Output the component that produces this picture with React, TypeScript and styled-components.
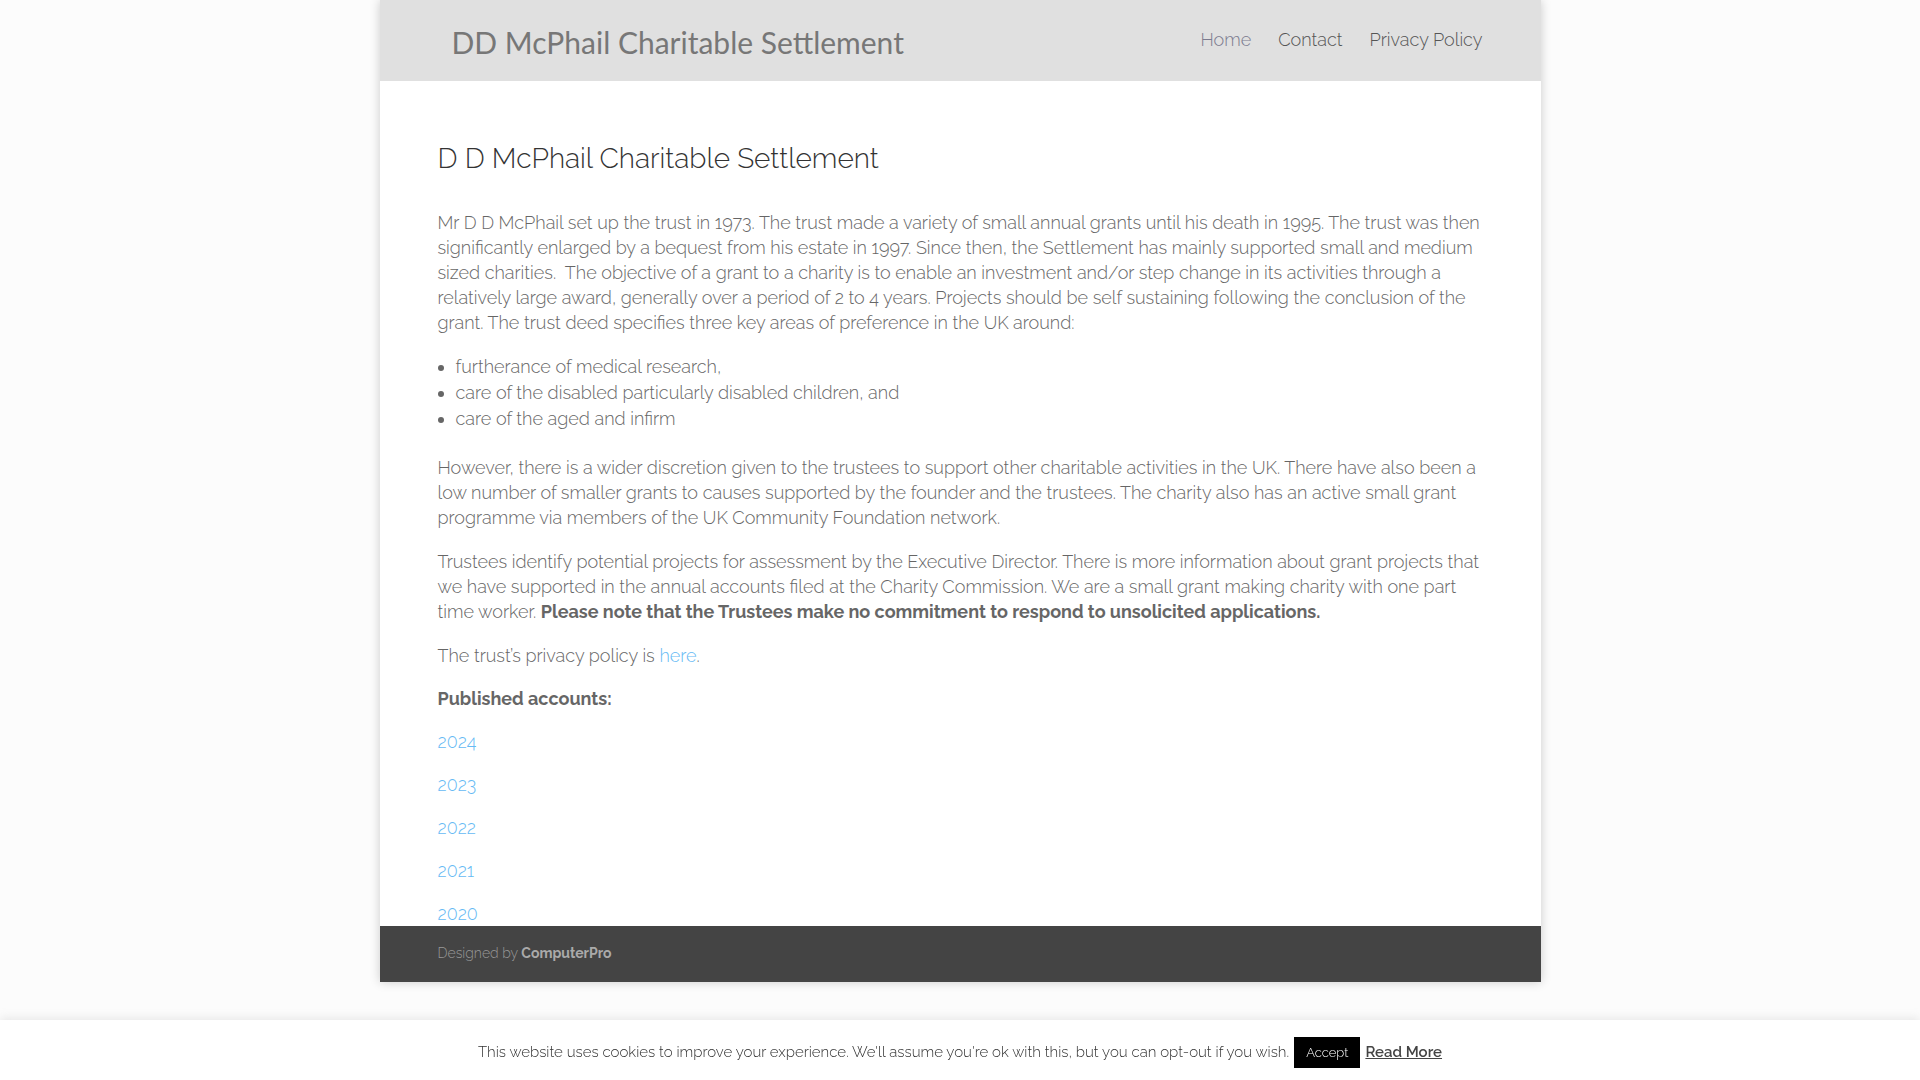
import React, { useState } from 'react';
import styled, { createGlobalStyle } from 'styled-components';

const colors = {
  page: '#fcfcfc',
  header: '#e0e0e0',
  logo: '#777',
  text: '#666',
  heading: '#333',
  link: '#66baf4',
  footer: '#444',
  footerText: '#999',
};

const GlobalStyle = createGlobalStyle`
  *, *::before, *::after { box-sizing: border-box; }
  body {
    margin: 0;
    background: ${colors.page};
    color: ${colors.text};
    font: 300 18px/25px Raleway, Lato, sans-serif;
    -webkit-font-smoothing: antialiased;
  }
  a { color: inherit; text-decoration: none; }
`;

const Sheet = styled.div`
  max-width: 1161px;
  margin: 0 auto 98px;
  background: #fff;
  box-shadow: 0 0 10px rgba(0, 0, 0, 0.2);
`;

const Header = styled.header`
  display: flex;
  justify-content: space-between;
  align-items: center;
  min-height: 81px;
  padding: 0 58px;
  background: ${colors.header};
`;

const Logo = styled.a`
  && { color: ${colors.logo}; }
  padding: 2px 0 0 14px;
  font: 400 30px/36px Lato, sans-serif;
`;

const Nav = styled.nav`
  display: flex;
  gap: 27px;
  padding-bottom: 2px;
`;

const NavLink = styled.a<{ $active?: boolean }>`
  && { color: ${(p) => (p.$active ? '#7b7b8f' : '#555')}; }
`;

const Article = styled.main`
  padding: 64px 58px 0;
`;

const Title = styled.h1`
  margin: 0 0 37px;
  color: ${colors.heading};
  font-size: 28px;
  font-weight: 300;
  line-height: 28px;
`;

const Paragraph = styled.p`
  margin: 0 0 19px;
`;

const Strong = styled.strong`
  font-weight: 700;
`;

const BulletList = styled.ul`
  margin: 0 0 23px;
  padding: 0 0 0 18px;
  line-height: 26px;
`;

const Documents = styled.section`
  display: grid;
  gap: 18px;

  ${Paragraph} { margin: 0; }
`;

const TextLink = styled.a`
  && { color: ${colors.link}; }
`;

const Footer = styled.footer`
  padding: 15px 58px 16px;
  background: ${colors.footer};
  color: ${colors.footerText};
  font-size: 14px;
`;

const Credit = styled.a`
  && { color: #aaa; }
  font-weight: 700;
`;

const CookieBar = styled.aside`
  position: fixed;
  inset: auto 0 0;
  display: flex;
  justify-content: center;
  align-items: center;
  gap: 5px;
  min-height: 60px;
  padding: 12px 12px 7px;
  background: #fff;
  color: #333;
  font-size: 15px;
  box-shadow: 0 -1px 10px rgba(172, 171, 171, 0.3);
`;

const AcceptButton = styled.button`
  padding: 8px 12px;
  border: 0;
  background: #000;
  color: #fff;
  font: 300 13px/15px Raleway, Lato, sans-serif;
  cursor: pointer;
`;

const ReadMore = styled.a`
  && { color: #444; text-decoration: underline; }
  font-weight: 600;
`;

const pages = ['Home', 'Contact', 'Privacy Policy'];
const causes = [
  'furtherance of medical research,',
  'care of the disabled particularly disabled children, and',
  'care of the aged and infirm',
];
const accountYears = [2024, 2023, 2022, 2021, 2020];

export default function App() {
  const [accepted, setAccepted] = useState(false);

  return (
    <>
      <GlobalStyle />
      <Sheet>
        <Header>
          <Logo href="#home">DD McPhail Charitable Settlement</Logo>
          <Nav>
            {pages.map((page, i) => (
              <NavLink key={page} href="#" $active={i === 0}>
                {page}
              </NavLink>
            ))}
          </Nav>
        </Header>
        <Article>
          <Title>D D McPhail Charitable Settlement</Title>
          <Paragraph>
            Mr D D McPhail set up the trust in 1973. The trust made a variety of small annual grants until his death in
            1995. The trust was then significantly enlarged by a bequest from his estate in 1997. Since then, the
            Settlement has mainly supported small and medium sized charities.&nbsp; The objective of a grant to a
            charity is to enable an investment and/or step change in its activities through a relatively large award,
            generally over a period of 2 to 4 years. Projects should be self sustaining following the conclusion of the
            grant. The trust deed specifies three key areas of preference in the UK around:
          </Paragraph>
          <BulletList>
            {causes.map((cause) => (
              <li key={cause}>{cause}</li>
            ))}
          </BulletList>
          <Paragraph>
            However, there is a wider discretion given to the trustees to support other charitable activities in the
            UK. There have also been a low number of smaller grants to causes supported by the founder and the
            trustees. The charity also has an active small grant programme via members of the UK Community Foundation
            network.
          </Paragraph>
          <Paragraph>
            Trustees identify potential projects for assessment by the Executive Director. There is more information
            about grant projects that we have supported in the annual accounts filed at the Charity Commission. We are
            a small grant making charity with one part time worker.{' '}
            <Strong>
              Please note that the Trustees make no commitment to respond to unsolicited applications.
            </Strong>
          </Paragraph>
          <Documents>
            <Paragraph>
              The trust’s privacy policy is <TextLink href="#privacy">here</TextLink>.
            </Paragraph>
            <Paragraph>
              <Strong>Published accounts:</Strong>
            </Paragraph>
            {accountYears.map((year) => (
              <Paragraph key={year}>
                <TextLink href={`#accounts-${year}`}>{year}</TextLink>
              </Paragraph>
            ))}
          </Documents>
        </Article>
        <Footer>
          Designed by <Credit href="#computerpro">ComputerPro</Credit>
        </Footer>
      </Sheet>
      {!accepted && (
        <CookieBar aria-label="Cookie notice">
          <span>
            This website uses cookies to improve your experience. We'll assume you're ok with this, but you can opt-out
            if you wish.
          </span>
          <AcceptButton type="button" onClick={() => setAccepted(true)}>
            Accept
          </AcceptButton>
          <ReadMore href="#privacy">Read More</ReadMore>
        </CookieBar>
      )}
    </>
  );
}
